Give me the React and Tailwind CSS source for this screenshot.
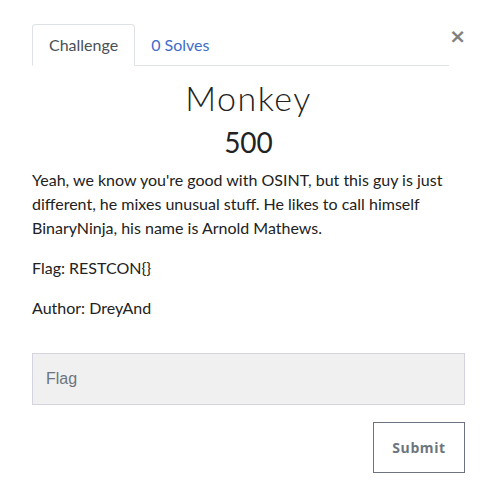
export default function App() {
  return (
    <div className="w-[488px] h-[493px] bg-white font-['Lato','Open_Sans',sans-serif] text-[#212529] pl-8 pr-[23px] pt-6">
      {/* Header: tabs + close */}
      <div className="flex items-start">
        <div className="flex w-[420px] border-b border-[#dee2e6] h-[42px]">
          <div className="h-[42px] -mb-px px-4 border border-b-white border-[#dee2e6] rounded-t bg-white flex items-center text-[16px] text-[#495057]">
            Challenge
          </div>
          <div className="h-[41px] px-4 flex items-center text-[16px] text-[#3e6ccb]">
            0 Solves
          </div>
        </div>
        <button className="ml-auto -mr-[1px] mt-[2px] text-[20px] font-bold leading-none text-[#808080] font-['DejaVu_Sans',sans-serif]">
          ×
        </button>
      </div>

      {/* Title */}
      <div className="text-center mt-[12px]">
        <h2 className="text-[34px] font-light leading-[40px] tracking-[1.5px] text-[#222]">Monkey</h2>
        <h3 className="mt-[6px] text-[28px] leading-[36px] text-[#222]">500</h3>
      </div>

      {/* Description */}
      <div className="mt-[8px] text-[16px] leading-[24px] text-[#222]">
        <p className="mb-4">
          Yeah, we know you're good with OSINT, but this guy is just different, he mixes unusual stuff. He likes to call himself BinaryNinja, his name is Arnold Mathews.
        </p>
        <p className="mb-4">Flag: RESTCON{'{}'}</p>
        <p>Author: DreyAnd</p>
      </div>

      {/* Flag form */}
      <div className="mt-[33px]">
        <input
          type="text"
          placeholder="Flag"
          className="w-full h-[52px] px-[13px] bg-[#f0f0f0] border border-[#d4d4e0] text-[16px] font-['Liberation_Sans',sans-serif] placeholder:text-[#6c757d] outline-none"
        />
        <div className="flex justify-end mt-[17px]">
          <button className="w-[92px] h-[51px] border border-[#6c7280] text-[14px] font-bold tracking-[0.6px] text-[#6c757d] font-['Open_Sans',sans-serif]">
            Submit
          </button>
        </div>
      </div>
    </div>
  );
}
